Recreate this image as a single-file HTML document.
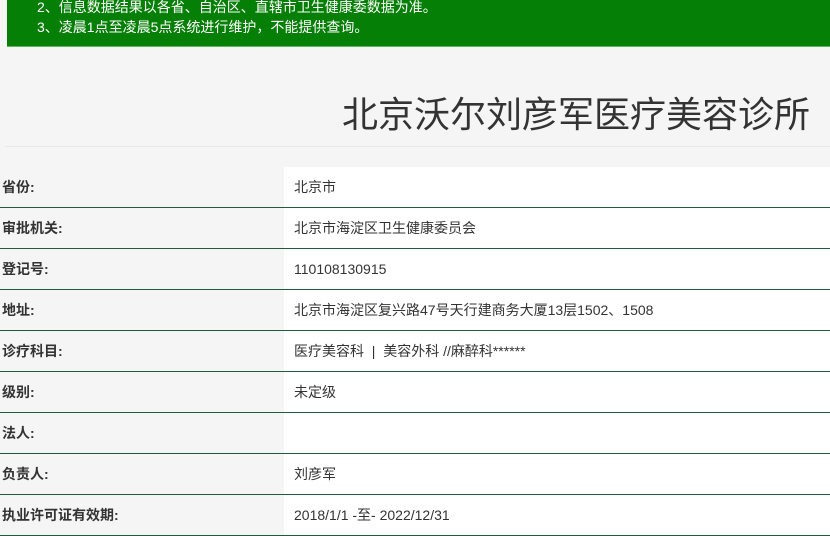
<!DOCTYPE html>
<html><head><meta charset="utf-8"><style>
body{margin:0;width:830px;height:528px;overflow:hidden;background:#f5f5f5;font-family:"Liberation Sans","Noto Sans CJK SC",sans-serif;}
.ban{position:absolute;left:7px;top:0;width:823px;height:46px;background:#067f06;border-bottom:1px solid #5cb85c;color:#fff;font-size:14px;}
.ban div{position:absolute;left:30px;}
h1{position:absolute;right:20px;top:86px;margin:0;font-weight:normal;font-size:36px;color:#333;}
.hr{position:absolute;left:5px;right:0;top:146px;height:1px;background:#e8e8e8;}
table{position:absolute;top:167px;left:0;width:830px;border-collapse:collapse;font-size:14px;}
td{height:40px;border-bottom:1px solid #1f5c3c;padding:0;}
td.l{width:284px;padding-left:2px;font-weight:bold;color:#333;box-sizing:border-box;}
td.v{background:#fff;padding-left:10px;color:#333;}
</style></head><body>
<div class="ban"><div style="top:-3px">2、信息数据结果以各省、自治区、直辖市卫生健康委数据为准。</div><div style="top:17px">3、凌晨1点至凌晨5点系统进行维护，不能提供查询。</div></div>
<h1>北京沃尔刘彦军医疗美容诊所</h1>
<div class="hr"></div>
<table>
<tr><td class="l">省份:</td><td class="v">北京市</td></tr>
<tr><td class="l">审批机关:</td><td class="v">北京市海淀区卫生健康委员会</td></tr>
<tr><td class="l">登记号:</td><td class="v">110108130915</td></tr>
<tr><td class="l">地址:</td><td class="v">北京市海淀区复兴路47号天行建商务大厦13层1502、1508</td></tr>
<tr><td class="l">诊疗科目:</td><td class="v">医疗美容科 &nbsp;| &nbsp;美容外科 //麻醉科******</td></tr>
<tr><td class="l">级别:</td><td class="v">未定级</td></tr>
<tr><td class="l">法人:</td><td class="v"></td></tr>
<tr><td class="l">负责人:</td><td class="v">刘彦军</td></tr>
<tr><td class="l">执业许可证有效期:</td><td class="v">2018/1/1 -至- 2022/12/31</td></tr>
</table>
</body></html>
